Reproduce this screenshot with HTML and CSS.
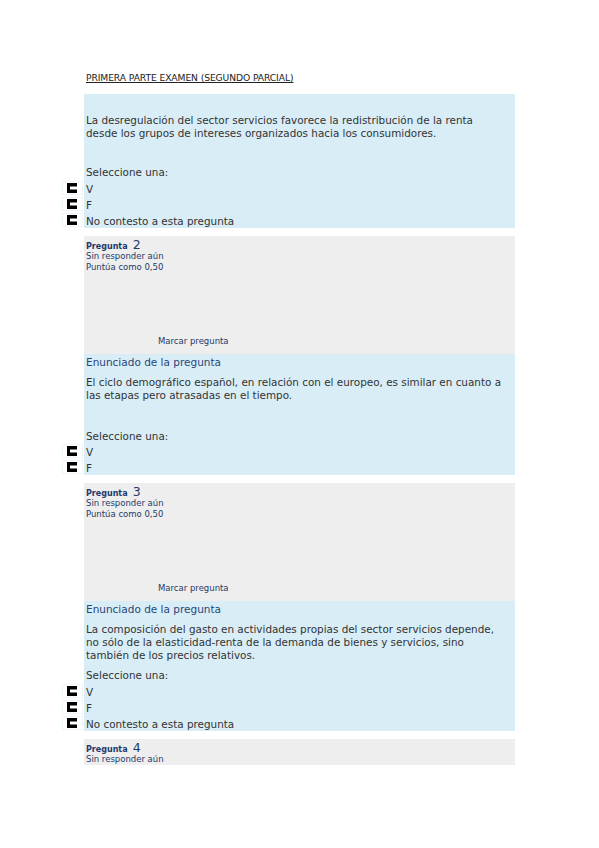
FILE: index.html
```html
<!DOCTYPE html>
<html lang="es">
<head>
<meta charset="utf-8">
<title>Primera parte examen</title>
<link rel="stylesheet" href="styles.css">
</head>
<body>
<div class="page">
  <p class="title">PRIMERA PARTE EXAMEN (SEGUNDO PARCIAL)</p>

  <div class="content c1">
    <p class="qtext q1text">La desregulación del sector servicios favorece la redistribución de la renta<br>desde los grupos de intereses organizados hacia los consumidores.</p>
    <p class="prompt p1">Seleccione una:</p>
    <div class="answers">
      <div class="opt"><span class="cell"><svg class="radio" viewBox="0 0 10 10" width="10" height="10"><rect x="0" y="0" width="10" height="10" fill="#000"/><rect x="3" y="3.5" width="7" height="3" fill="#fff"/></svg></span><span class="lbl">V</span></div>
      <div class="opt"><span class="cell"><svg class="radio" viewBox="0 0 10 10" width="10" height="10"><rect x="0" y="0" width="10" height="10" fill="#000"/><rect x="3" y="3.5" width="7" height="3" fill="#fff"/></svg></span><span class="lbl">F</span></div>
      <div class="opt"><span class="cell"><svg class="radio" viewBox="0 0 10 10" width="10" height="10"><rect x="0" y="0" width="10" height="10" fill="#000"/><rect x="3" y="3.5" width="7" height="3" fill="#fff"/></svg></span><span class="lbl">No contesto a esta pregunta</span></div>
    </div>
  </div>

  <div class="info">
    <div class="qno"><span class="qlabel">Pregunta</span> <span class="qnum">2</span></div>
    <div class="state">Sin responder aún</div>
    <div class="grade">Puntúa como 0,50</div>
    <div class="flag">Marcar pregunta</div>
  </div>
  <div class="content c2">
    <p class="head">Enunciado de la pregunta</p>
    <p class="qtext q2text">El ciclo demográfico español, en relación con el europeo, es similar en cuanto a<br>las etapas pero atrasadas en el tiempo.</p>
    <p class="prompt p2">Seleccione una:</p>
    <div class="answers">
      <div class="opt"><span class="cell"><svg class="radio" viewBox="0 0 10 10" width="10" height="10"><rect x="0" y="0" width="10" height="10" fill="#000"/><rect x="3" y="3.5" width="7" height="3" fill="#fff"/></svg></span><span class="lbl">V</span></div>
      <div class="opt"><span class="cell"><svg class="radio" viewBox="0 0 10 10" width="10" height="10"><rect x="0" y="0" width="10" height="10" fill="#000"/><rect x="3" y="3.5" width="7" height="3" fill="#fff"/></svg></span><span class="lbl">F</span></div>
    </div>
  </div>

  <div class="info">
    <div class="qno"><span class="qlabel">Pregunta</span> <span class="qnum">3</span></div>
    <div class="state">Sin responder aún</div>
    <div class="grade">Puntúa como 0,50</div>
    <div class="flag">Marcar pregunta</div>
  </div>
  <div class="content c3">
    <p class="head">Enunciado de la pregunta</p>
    <p class="qtext q3text">La composición del gasto en actividades propias del sector servicios depende,<br>no sólo de la elasticidad-renta de la demanda de bienes y servicios, sino<br>también de los precios relativos.</p>
    <p class="prompt p3">Seleccione una:</p>
    <div class="answers">
      <div class="opt"><span class="cell"><svg class="radio" viewBox="0 0 10 10" width="10" height="10"><rect x="0" y="0" width="10" height="10" fill="#000"/><rect x="3" y="3.5" width="7" height="3" fill="#fff"/></svg></span><span class="lbl">V</span></div>
      <div class="opt"><span class="cell"><svg class="radio" viewBox="0 0 10 10" width="10" height="10"><rect x="0" y="0" width="10" height="10" fill="#000"/><rect x="3" y="3.5" width="7" height="3" fill="#fff"/></svg></span><span class="lbl">F</span></div>
      <div class="opt"><span class="cell"><svg class="radio" viewBox="0 0 10 10" width="10" height="10"><rect x="0" y="0" width="10" height="10" fill="#000"/><rect x="3" y="3.5" width="7" height="3" fill="#fff"/></svg></span><span class="lbl">No contesto a esta pregunta</span></div>
    </div>
  </div>

  <div class="info info-last">
    <div class="qno"><span class="qlabel">Pregunta</span> <span class="qnum">4</span></div>
    <div class="state">Sin responder aún</div>
  </div>
</div>
</body>
</html>
```

FILE: styles.css
```css
html, body {
  margin: 0;
  padding: 0;
  background: #ffffff;
}

body {
  font-family: "DejaVu Sans", Verdana, sans-serif;
  color: #333333;
}

p {
  margin: 0;
}

.page {
  width: 431px;
  margin-left: 84px;
  padding-top: 72px;
}

.title {
  font-size: 9.2px;
  line-height: 11px;
  margin-left: 2px;
  margin-bottom: 11px;
  color: #222222;
  text-decoration: underline;
  letter-spacing: -0.1px;
}

.content {
  background: #d9edf7;
  padding-left: 2px;
}

.info {
  background: #eeeeee;
  height: 118px;
  margin-top: 8px;
  padding-left: 2px;
  padding-top: 1px;
  box-sizing: border-box;
  display: flex;
  flex-direction: column;
  color: #1d3a6b;
}

.info-last {
  height: 26px;
}

.qno {
  line-height: 14px;
  height: 14px;
}

.qlabel {
  font-size: 8px;
  font-weight: bold;
}

.qnum {
  font-size: 12.5px;
}

.state, .grade {
  font-size: 8.5px;
  line-height: 10.5px;
}

.flag {
  margin-top: auto;
  margin-bottom: 8px;
  margin-left: 72px;
  font-size: 8.5px;
  line-height: 10px;
}

.head {
  font-size: 10.5px;
  line-height: 14px;
  padding-top: 1px;
  color: #2a4677;
}

.qtext {
  font-size: 10.4px;
  line-height: 13px;
  white-space: nowrap;
}

.prompt {
  font-size: 10.4px;
  line-height: 12px;
}

.c1 {
  padding-top: 20px;
}

.p1 {
  margin-top: 26px;
  margin-bottom: 2px;
}

.c2 .qtext {
  margin-top: 7px;
}

.p2 {
  margin-top: 28px;
  margin-bottom: 1px;
}

.c3 .qtext {
  margin-top: 7px;
}

.p3 {
  margin-top: 7px;
  margin-bottom: 2px;
}

.answers {
  margin-left: -24px;
}

.opt {
  display: flex;
  align-items: center;
  height: 16px;
}

.cell {
  width: 21px;
  height: 14px;
  margin-right: 3px;
  background: #ffffff;
  box-shadow: inset 0 0 0 1px #eef6fa;
  display: flex;
  align-items: center;
  padding-left: 5px;
  box-sizing: border-box;
}

.radio {
  display: block;
}

.lbl {
  font-size: 10.4px;
  line-height: 16px;
  padding-top: 2px;
}
```
